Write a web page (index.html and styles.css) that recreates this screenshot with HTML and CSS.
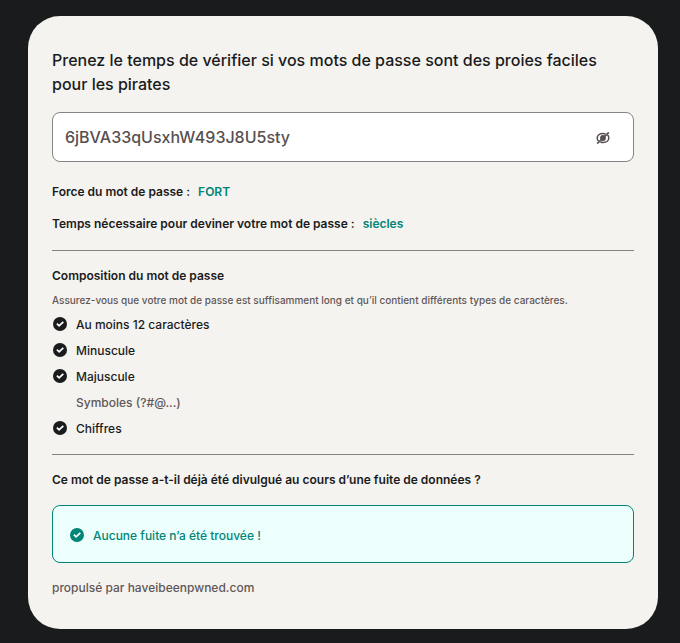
FILE: index.html
```html
<!DOCTYPE html>
<html lang="fr">
<head>
  <meta charset="UTF-8">
  <meta name="viewport" content="width=device-width, initial-scale=1.0">
  <title>Vérification du mot de passe</title>
  <link rel="stylesheet" href="styles.css">
</head>
<body>

  <div class="card">
    <h1 class="title">Prenez le temps de vérifier si vos mots de passe sont des proies faciles pour les pirates</h1>

    <div class="password-field">
      <span class="password-value">6jBVA33qUsxhW493J8U5sty</span>
      <svg class="eye" viewBox="0 0 16 16" fill="none" stroke="currentColor" stroke-width="1.5">
        <path d="M3.6 11.2C2.6 10.4 2.2 9.2 2.2 8C2.2 5.4 4.6 3.5 8 3.5C9 3.5 9.8 3.7 10.6 4"/>
        <path d="M12.4 4.9C13.4 5.7 13.8 6.8 13.8 8C13.8 10.6 11.4 12.5 8 12.5C7 12.5 6.2 12.3 5.4 12"/>
        <circle cx="8" cy="8" r="2.9" fill="currentColor" stroke="none"/>
        <path d="M2.2 13.6L13.8 2.4"/>
      </svg>
    </div>

    <div class="result">Force du mot de passe : <span class="value">FORT</span></div>
    <div class="result">Temps nécessaire pour deviner votre mot de passe : <span class="value">siècles</span></div>

    <div class="section composition">
      <h2 class="subtitle">Composition du mot de passe</h2>
      <p class="hint">Assurez-vous que votre mot de passe est suffisamment long et qu’il contient différents types de caractères.</p>
      <ul class="checks">
        <li class="ok"><svg class="check" viewBox="0 0 14 14"><circle cx="7" cy="7" r="7" fill="currentColor"/><path d="M3.9 6.7l2.2 2.1 4.2-4" fill="none" stroke="#fff" stroke-width="1.8"/></svg>Au moins 12 caractères</li>
        <li class="ok"><svg class="check" viewBox="0 0 14 14"><circle cx="7" cy="7" r="7" fill="currentColor"/><path d="M3.9 6.7l2.2 2.1 4.2-4" fill="none" stroke="#fff" stroke-width="1.8"/></svg>Minuscule</li>
        <li class="ok"><svg class="check" viewBox="0 0 14 14"><circle cx="7" cy="7" r="7" fill="currentColor"/><path d="M3.9 6.7l2.2 2.1 4.2-4" fill="none" stroke="#fff" stroke-width="1.8"/></svg>Majuscule</li>
        <li class="missing">Symboles (?#@...)</li>
        <li class="ok"><svg class="check" viewBox="0 0 14 14"><circle cx="7" cy="7" r="7" fill="currentColor"/><path d="M3.9 6.7l2.2 2.1 4.2-4" fill="none" stroke="#fff" stroke-width="1.8"/></svg>Chiffres</li>
      </ul>
    </div>

    <div class="section leaks">
      <h2 class="subtitle">Ce mot de passe a-t-il déjà été divulgué au cours d’une fuite de données ?</h2>
      <div class="alert">
        <svg class="check" viewBox="0 0 14 14"><circle cx="7" cy="7" r="7" fill="currentColor"/><path d="M3.9 6.7l2.2 2.1 4.2-4" fill="none" stroke="#fff" stroke-width="1.8"/></svg>
        <span>Aucune fuite n’a été trouvée !</span>
      </div>
      <p class="powered">propulsé par haveibeenpwned.com</p>
    </div>
  </div>

</body>
</html>
```
FILE: styles.css
```css
* { box-sizing: border-box; }
body {
  font-family: Inter, sans-serif;
  margin: 0;
  padding: 16px 22px 14px 28px;
  background: #1a1b1c;
  color: #1a1b1c;
}
.card {
  height: 613px;
  padding: 32px 24px;
  background: #f5f3ef;
  border-radius: 32px;
}
h1, h2, p, ul {
  margin: 0;
  padding: 0;
}
.title {
  font-size: 16px;
  line-height: 24px;
  font-weight: 500;
}
.password-field {
  display: flex;
  align-items: center;
  justify-content: space-between;
  height: 50px;
  margin: 16px 0 20px;
  padding: 0 22px 0 12px;
  background: #fff;
  border: 1px solid #858384;
  border-radius: 8px;
}
.password-value {
  font-size: 16px;
  font-weight: 500;
  color: #574f50;
}
.eye {
  width: 16px;
  height: 16px;
  margin-top: 2px;
  color: #574f50;
}
.result {
  font-size: 12px;
  line-height: 20px;
  font-weight: 600;
  margin-bottom: 12px;
}
.value {
  margin-left: 5px;
  color: #008577;
}
.section {
  border-top: 1px solid #858384;
}
.composition {
  margin-top: 16px;
  padding-top: 15px;
}
.subtitle {
  font-size: 12px;
  line-height: 20px;
  font-weight: 600;
}
.hint {
  margin-top: 6px;
  font-size: 10px;
  line-height: 16px;
  font-weight: 500;
  color: #5f5758;
}
.checks {
  list-style: none;
  margin-top: 3px;
}
.checks li {
  display: flex;
  align-items: center;
  height: 26px;
  font-size: 12px;
  font-weight: 500;
}
.check {
  flex: none;
  width: 14px;
  height: 14px;
}
.checks .check {
  margin: 0 9px 0 1px;
}
.checks .missing {
  padding-left: 24px;
  color: #5f5758;
}
.leaks {
  margin-top: 13px;
  padding-top: 15px;
}
.alert {
  display: flex;
  align-items: center;
  gap: 9px;
  height: 58px;
  margin: 15px 0;
  padding: 2px 17px 0;
  background: #edfffc;
  border: 1px solid #008577;
  border-radius: 8px;
  color: #008577;
  font-size: 12px;
  font-weight: 500;
}
.powered {
  font-size: 12px;
  line-height: 20px;
  font-weight: 500;
  color: #5f5758;
}
```
